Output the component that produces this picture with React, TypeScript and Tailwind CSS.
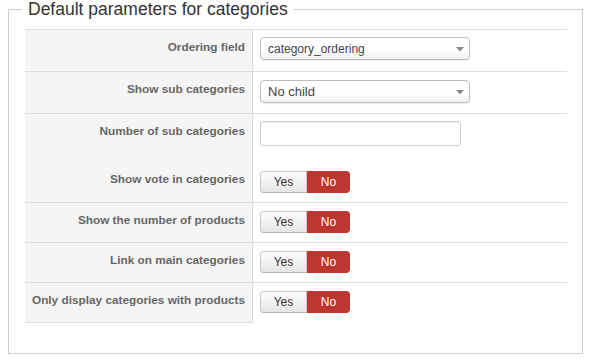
import React from "react";

type Row = {
  label: string;
  kind: "select" | "input" | "toggle";
  value?: string;
  h: string;
  pt: string;
  border?: boolean;
  last?: boolean;
  textSize?: string;
};

const ROWS: Row[] = [
  { label: "Ordering field", kind: "select", value: "category_ordering", h: "h-[42px]", pt: "pt-[7px]", border: true, textSize: "text-[12px]" },
  { label: "Show sub categories", kind: "select", value: "No child", h: "h-[42px]", pt: "pt-[8px]", border: true, textSize: "text-[13px]" },
  { label: "Number of sub categories", kind: "input", h: "h-[49px]", pt: "pt-[7px]", border: true },
  { label: "Show vote in categories", kind: "toggle", h: "h-[40px]", pt: "pt-[9px]" },
  { label: "Show the number of products", kind: "toggle", h: "h-[40px]", pt: "pt-[8px]", border: true },
  { label: "Link on main categories", kind: "toggle", h: "h-[40px]", pt: "pt-[8px]", border: true },
  { label: "Only display categories with products", kind: "toggle", h: "h-[41px]", pt: "pt-[8px]", border: true, last: true },
];

const Select: React.FC<{ value: string; textSize?: string }> = ({ value, textSize }) => (
  <div className="ml-[7px] flex h-[23px] w-[210px] items-center justify-between rounded-[4px] border border-[#bdbdbd] bg-gradient-to-b from-white from-60% to-[#f0f0f0] pl-[7px] pr-[5px] shadow-[0_1px_1px_rgba(0,0,0,0.08)]">
    <span className={`${textSize ?? "text-[12px]"} leading-none text-[#444]`}>{value}</span>
    <svg width="8" height="5" viewBox="0 0 8 5" className="mt-[1px]">
      <path d="M0 0 L8 0 L4 4.5 Z" fill="#888" />
    </svg>
  </div>
);

const Toggle: React.FC = () => (
  <div className="ml-[7px] flex h-[22px] text-[12px] leading-none">
    <span className="flex w-[47px] items-center justify-center rounded-l-[4px] border border-[#c8c8c8] border-b-[#b3b3b3] bg-gradient-to-b from-white to-[#e6e6e6] text-[#333]">
      Yes
    </span>
    <span className="flex w-[43px] items-center justify-center rounded-r-[4px] bg-[#bd362f] text-white">
      No
    </span>
  </div>
);

export default function App() {
  return (
    <div className="h-[362px] w-[589px] bg-white font-['Liberation_Sans',Arial,sans-serif]">
      <fieldset className="ml-[8px] w-[575px] border border-[#cccccc] pb-[30px] pl-[16px] pr-[14px] pt-[10px]">
        <legend className="-ml-[3px] px-[6px] text-[17.5px] leading-[19px] text-[#333]">
          Default parameters for categories
        </legend>
        <div className="w-[542px]">
          {ROWS.map((r) => (
            <div
              key={r.label}
              className={`flex ${r.h} ${r.border ? "border-t border-[#dddddd]" : ""}`}
            >
              <div
                className={`w-[228px] shrink-0 border-r border-[#dddddd] bg-[#f5f5f5] pr-[7px] pt-[8px] text-right text-[11.8px] font-bold leading-[18px] text-[#666] ${
                  r.last ? "border-b" : ""
                }`}
              >
                {r.label}
              </div>
              <div className={`flex-1 ${r.pt}`}>
                {r.kind === "select" && <Select value={r.value ?? ""} textSize={r.textSize} />}
                {r.kind === "input" && (
                  <div className="ml-[7px] h-[25px] w-[201px] rounded-[3px] border border-[#cccccc] bg-white shadow-[inset_0_1px_1px_rgba(0,0,0,0.05)]" />
                )}
                {r.kind === "toggle" && <Toggle />}
              </div>
            </div>
          ))}
        </div>
      </fieldset>
    </div>
  );
}
